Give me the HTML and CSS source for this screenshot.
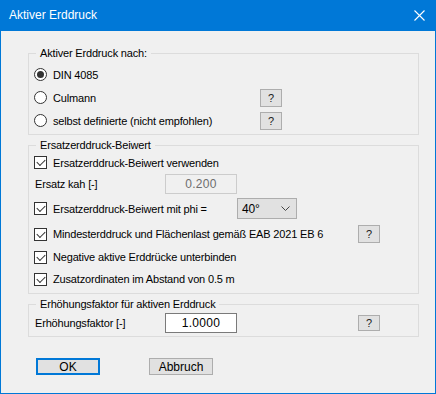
FILE: index.html
```html
<!DOCTYPE html>
<html lang="de">
<head>
    <meta charset="utf-8">
    <title>Aktiver Erddruck</title>
    <link rel="stylesheet" href="styles.css">
</head>
<body>
    <div class="dialog">
        <div class="titlebar">
            <span class="title">Aktiver Erddruck</span>
            <svg class="close" width="11" height="11" viewBox="0 0 11 11">
                <path d="M0.5 0.5 L10.5 10.5 M10.5 0.5 L0.5 10.5" stroke="#fff" stroke-width="1.1" fill="none" />
            </svg>
        </div>
        <div class="content">
            <fieldset class="group g1">
                <legend>Aktiver Erddruck nach:</legend>
                <div class="row r1">
                    <span class="radio on"></span><span class="label">DIN 4085</span>
                </div>
                <div class="row r1">
                    <span class="radio"></span><span class="label">Culmann</span>
                    <span class="help">?</span>
                </div>
                <div class="row r1">
                    <span class="radio"></span><span class="label">selbst definierte (nicht empfohlen)</span>
                    <span class="help">?</span>
                </div>
            </fieldset>

            <fieldset class="group g2">
                <legend>Ersatzerddruck-Beiwert</legend>
                <div class="row r-a">
                    <span class="check"></span><span class="label">Ersatzerddruck-Beiwert verwenden</span>
                </div>
                <div class="row r-a">
                    <span class="text">Ersatz kah [-]</span>
                    <span class="field disabled">0.200</span>
                </div>
                <div class="row r-b">
                    <span class="check"></span><span class="label wide">Ersatzerddruck-Beiwert mit phi =</span>
                    <span class="select">40°<svg width="9" height="5" viewBox="0 0 9 5"><path d="M0.5 0.5 L4.5 4.5 L8.5 0.5" stroke="#444" fill="none" /></svg></span>
                </div>
                <div class="row r-c">
                    <span class="check"></span><span class="label">Mindesterddruck und Flächenlast gemäß EAB 2021 EB 6</span>
                    <span class="help">?</span>
                </div>
                <div class="row r-d">
                    <span class="check"></span><span class="label">Negative aktive Erddrücke unterbinden</span>
                </div>
                <div class="row r-d">
                    <span class="check"></span><span class="label">Zusatzordinaten im Abstand von 0.5 m</span>
                </div>
            </fieldset>

            <fieldset class="group g3">
                <legend>Erhöhungsfaktor für aktiven Erddruck</legend>
                <div class="row r-e">
                    <span class="text">Erhöhungsfaktor [-]</span>
                    <span class="field">1.0000</span>
                    <span class="help">?</span>
                </div>
            </fieldset>

            <div class="buttons">
                <span class="btn default">OK</span>
                <span class="btn">Abbruch</span>
            </div>
        </div>
    </div>
</body>
</html>
```

FILE: styles.css
```css
* {
    margin: 0;
    padding: 0;
    box-sizing: border-box;
}

body {
    background: #f0f0f0;
    font-family: "Liberation Sans", Arial, sans-serif;
    font-size: 11px;
    letter-spacing: -0.17px;
    color: #000;
}

.dialog {
    width: 436px;
    height: 394px;
    border: 1px solid #0078d7;
    border-top: 0;
    background: #f0f0f0;
}

.titlebar {
    height: 31px;
    background: #0078d7;
    display: flex;
    align-items: center;
    justify-content: space-between;
    padding: 0 9px 0 8px;
}

.title {
    color: #fff;
    font-size: 12px;
    letter-spacing: 0;
    padding-bottom: 1px;
}

.close {
    margin-right: 1px;
}

.content {
    padding: 15px 17px 0 27px;
}

.group {
    border: 1px solid #dcdcdc;
    padding: 0 0 0 5px;
    width: 391px;
}

.group legend {
    margin-left: 2px;
    padding: 0 4px 0 4px;
    line-height: 14px;
    height: 14px;
}

.g1 {
    padding-top: 3px;
    padding-bottom: 2px;
}

.g2 {
    margin-top: 3px;
    padding-top: 0;
    padding-bottom: 3px;
}

.g3 {
    margin-top: 3px;
    padding-bottom: 2px;
}

.row {
    display: flex;
    align-items: center;
    position: relative;
}

.r1 { height: 23px; }
.r-a { height: 21px; }
.r-b { height: 25px; margin-top: 2px; }
.r-c { height: 24px; margin-top: 1px; }
.r-d { height: 22px; }
.r-e { height: 22px; margin-top: 1px; }

.label {
    margin-left: 6px;
}

.wide {
    width: 184px;
}

.text {
    width: 131px;
    padding-left: 1px;
}

.radio {
    width: 13px;
    height: 13px;
    border: 1px solid #333;
    border-radius: 50%;
    background: #fff;
    display: flex;
    align-items: center;
    justify-content: center;
}

.radio.on::after {
    content: "";
    width: 7px;
    height: 7px;
    border-radius: 50%;
    background: #333;
}

.check {
    width: 13px;
    height: 13px;
    border: 1px solid #333;
    background: #fff;
    display: flex;
    align-items: center;
    justify-content: center;
}

.check::after {
    content: "";
    width: 7px;
    height: 4px;
    border-left: 1px solid #333;
    border-bottom: 1px solid #333;
    transform: rotate(-45deg);
    margin-top: -2px;
}

.help {
    position: absolute;
    width: 22px;
    height: 18px;
    background: #e1e1e1;
    border: 1px solid #adadad;
    display: flex;
    align-items: center;
    justify-content: center;
    color: #222;
}

.g1 .help {
    left: 226px;
}

.r-c .help,
.r-e .help {
    left: 324px;
}

.r-e .help {
    height: 16px;
}

.field {
    width: 72px;
    height: 20px;
    border: 1px solid #7a7a7a;
    background: #fff;
    display: flex;
    align-items: center;
    justify-content: center;
    font-size: 12px;
    letter-spacing: 0.3px;
}

.field.disabled {
    border-color: #cccccc;
    background: #f0f0f0;
    color: #6d6d6d;
}

.select {
    width: 60px;
    height: 21px;
    background: #e1e1e1;
    border: 1px solid #adadad;
    display: flex;
    align-items: center;
    justify-content: space-between;
    padding: 0 6px 0 4px;
    font-size: 12px;
}

.buttons {
    display: flex;
    gap: 49px;
    padding: 21px 0 0 8px;
}

.btn {
    width: 64px;
    height: 17px;
    background: #e1e1e1;
    border: 1px solid #adadad;
    display: flex;
    align-items: center;
    justify-content: center;
    font-size: 12px;
    letter-spacing: 0;
}

.btn.default {
    border: 2px solid #0078d7;
}
```
